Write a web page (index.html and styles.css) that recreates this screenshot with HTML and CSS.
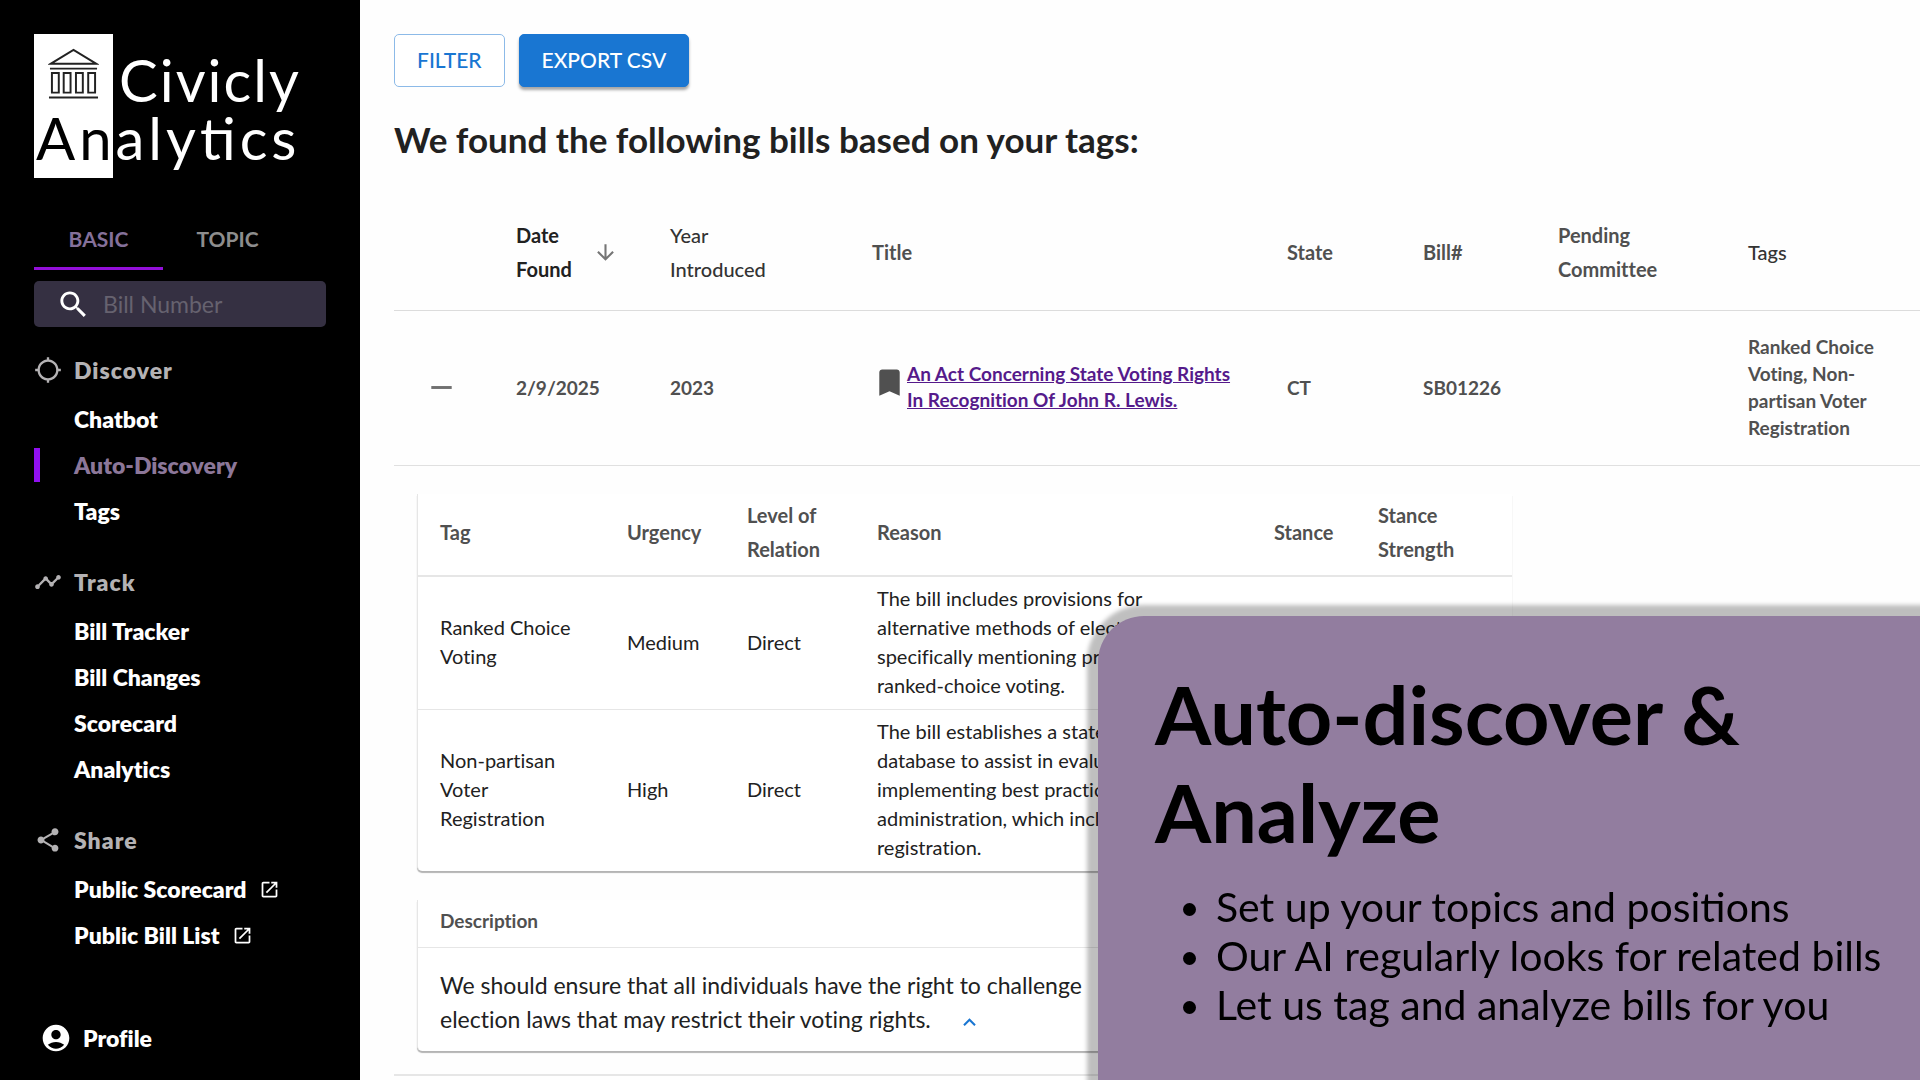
FILE: index.html
```html
<!DOCTYPE html>
<html lang="en">
<head>
  <meta charset="UTF-8">
  <meta name="viewport" content="width=device-width, initial-scale=1.0">
  <title>Civicly Analytics</title>
  <link rel="stylesheet" href="styles.css">
</head>
<body>
  <aside class="sidebar">
    <div class="logo">
      <div class="logo-mark">
        <svg class="logo-icon" viewBox="0 0 52 52" fill="none" stroke="#222" stroke-width="2">
          <path d="M3 15.500 26 1.500 49 15.500zM2 20.500h48M1 50h50"/>
          <path d="M4 25h7v20h-7zM16 25h7v20h-7zM28.500 25h7v20h-7zM41 25h7v20h-7z"/>
        </svg>
      </div>
      <span class="logo-top">Civicly</span>
      <span class="logo-bottom"><span class="logo-dark">An</span>alytics</span>
    </div>

    <div class="tabs" role="tablist">
      <button class="tab active" role="tab" aria-selected="true">BASIC</button>
      <button class="tab" role="tab" aria-selected="false">TOPIC</button>
    </div>

    <label class="search">
      <svg class="search-icon" viewBox="0 0 24 24"><path d="M15.500 14h-.790l-.280-.270C15.410 12.590 16 11.110 16 9.500 16 5.910 13.090 3 9.500 3S3 5.910 3 9.500 5.910 16 9.500 16c1.610 0 3.090-.590 4.230-1.570l.270.280v.790l5 4.990L20.490 19l-4.990-5zm-6 0C7.010 14 5 11.990 5 9.500S7.010 5 9.500 5 14 7.010 14 9.500 11.990 14 9.500 14z"/></svg>
      <input type="text" placeholder="Bill Number" aria-label="Bill Number">
    </label>

    <nav class="menu">
      <section class="group">
        <h2>
          <svg viewBox="0 0 24 24"><path d="M20.940 11c-.460-4.170-3.770-7.480-7.940-7.940V1h-2v2.060C6.830 3.520 3.520 6.830 3.060 11H1v2h2.060c.460 4.170 3.770 7.480 7.940 7.940V23h2v-2.060c4.170-.460 7.480-3.770 7.940-7.940H23v-2h-2.060zM12 19c-3.870 0-7-3.130-7-7s3.130-7 7-7 7 3.130 7 7-3.130 7-7 7z"/></svg>
          Discover
        </h2>
        <a href="#">Chatbot</a>
        <a href="#" class="current">Auto-Discovery</a>
        <a href="#">Tags</a>
      </section>
      <section class="group">
        <h2>
          <svg viewBox="0 0 24 24"><path d="M23 8c0 1.100-.900 2-2 2-.180 0-.350-.020-.510-.070l-3.560 3.550c.050.160.070.340.070.520 0 1.100-.900 2-2 2s-2-.900-2-2c0-.180.020-.360.070-.520l-2.550-2.550c-.160.050-.340.070-.520.070s-.360-.020-.520-.070l-4.550 4.560c.050.160.070.330.070.510 0 1.100-.900 2-2 2s-2-.900-2-2 .900-2 2-2c.180 0 .350.020.510.070l4.560-4.550C8.020 9.360 8 9.180 8 9c0-1.100.900-2 2-2s2 .900 2 2c0 .180-.020.360-.070.520l2.550 2.550c.160-.050.340-.070.520-.070s.360.020.520.070l3.550-3.560C19.020 8.350 19 8.180 19 8c0-1.100.900-2 2-2s2 .900 2 2z"/></svg>
          Track
        </h2>
        <a href="#">Bill Tracker</a>
        <a href="#">Bill Changes</a>
        <a href="#">Scorecard</a>
        <a href="#">Analytics</a>
      </section>
      <section class="group">
        <h2>
          <svg viewBox="0 0 24 24"><path d="M18 16.080c-.760 0-1.440.300-1.960.770L8.910 12.700c.050-.230.090-.460.090-.700s-.040-.470-.090-.700l7.050-4.110c.540.500 1.250.810 2.040.810 1.660 0 3-1.340 3-3s-1.340-3-3-3-3 1.340-3 3c0 .240.040.470.090.700L8.040 9.810C7.500 9.310 6.790 9 6 9c-1.660 0-3 1.340-3 3s1.340 3 3 3c.790 0 1.500-.310 2.040-.810l7.120 4.160c-.050.210-.080.430-.080.650 0 1.610 1.310 2.920 2.920 2.920s2.920-1.310 2.920-2.920-1.310-2.920-2.920-2.920z"/></svg>
          Share
        </h2>
        <a href="#">Public Scorecard
          <svg viewBox="0 0 24 24"><path d="M19 19H5V5h7V3H5c-1.110 0-2 .900-2 2v14c0 1.100.890 2 2 2h14c1.100 0 2-.900 2-2v-7h-2v7zM14 3v2h3.590l-9.830 9.830 1.410 1.410L19 6.410V10h2V3h-7z"/></svg>
        </a>
        <a href="#">Public Bill List
          <svg viewBox="0 0 24 24"><path d="M19 19H5V5h7V3H5c-1.110 0-2 .900-2 2v14c0 1.100.890 2 2 2h14c1.100 0 2-.900 2-2v-7h-2v7zM14 3v2h3.590l-9.830 9.830 1.410 1.410L19 6.410V10h2V3h-7z"/></svg>
        </a>
      </section>
    </nav>

    <a href="#" class="profile">
      <svg viewBox="0 0 24 24"><path d="M12 2C6.480 2 2 6.480 2 12s4.480 10 10 10 10-4.480 10-10S17.520 2 12 2zm0 4c1.930 0 3.500 1.570 3.500 3.500S13.930 13 12 13s-3.500-1.570-3.500-3.500S10.070 6 12 6zm0 14c-2.030 0-4.430-.820-6.140-2.880C7.550 15.800 9.680 15 12 15s4.450.800 6.140 2.120C16.430 19.180 14.030 20 12 20z"/></svg>
      Profile
    </a>
  </aside>

  <main class="content">
    <div class="actions">
      <button class="btn btn-outline">FILTER</button>
      <button class="btn btn-primary">EXPORT CSV</button>
    </div>

    <h1>We found the following bills based on your tags:</h1>

    <table class="bills">
      <colgroup>
        <col class="col-toggle">
        <col class="col-date">
        <col class="col-year">
        <col class="col-title">
        <col class="col-state">
        <col class="col-bill">
        <col class="col-committee">
        <col class="col-tags">
      </colgroup>
      <thead>
        <tr>
          <td></td>
          <th class="sorted">
            <div class="sort">
              <span>Date Found</span>
              <svg viewBox="0 0 24 24"><path d="M20 12l-1.410-1.410L13 16.170V4h-2v12.170l-5.580-5.590L4 12l8 8 8-8z"/></svg>
            </div>
          </th>
          <th class="dark">Year<br>Introduced</th>
          <th>Title</th>
          <th>State</th>
          <th>Bill#</th>
          <th>Pending Committee</th>
          <th class="dark">Tags</th>
        </tr>
      </thead>
      <tbody>
        <tr class="bill-row">
          <td>
            <button class="toggle" aria-label="Collapse">
              <svg viewBox="0 0 24 24"><path d="M19 13H5v-2h14v2z"/></svg>
            </button>
          </td>
          <td>2/9/2025</td>
          <td>2023</td>
          <td>
            <div class="bill-title">
              <svg viewBox="0 0 24 24"><path d="M17 3H7c-1.100 0-1.990.900-1.990 2L5 21l7-3 7 3V5c0-1.100-.900-2-2-2z"/></svg>
              <a href="#">An Act Concerning State Voting Rights In Recognition Of John R. Lewis.</a>
            </div>
          </td>
          <td>CT</td>
          <td>SB01226</td>
          <td></td>
          <td>Ranked Choice Voting, Non-partisan Voter Registration</td>
        </tr>
        <tr>
          <td class="details" colspan="8">
            <table class="card tag-table">
              <colgroup>
                <col class="col-tag">
                <col class="col-urgency">
                <col class="col-level">
                <col class="col-reason">
                <col class="col-stance">
                <col class="col-strength">
              </colgroup>
              <thead>
                <tr>
                  <th>Tag</th>
                  <th>Urgency</th>
                  <th>Level of Relation</th>
                  <th>Reason</th>
                  <th>Stance</th>
                  <th>Stance Strength</th>
                </tr>
              </thead>
              <tbody>
                <tr>
                  <td>Ranked Choice Voting</td>
                  <td>Medium</td>
                  <td>Direct</td>
                  <td>The bill includes provisions for<br>alternative methods of elections,<br>specifically mentioning proposed<br>ranked-choice voting.</td>
                  <td></td>
                  <td></td>
                </tr>
                <tr>
                  <td>Non-partisan Voter Registration</td>
                  <td>High</td>
                  <td>Direct</td>
                  <td>The bill establishes a statewide<br>database to assist in evaluating and<br>implementing best practices in<br>administration, which includes<br>registration.</td>
                  <td></td>
                  <td></td>
                </tr>
              </tbody>
            </table>

            <div class="card description">
              <h3>Description</h3>
              <p>
                We should ensure that all individuals have the right to challenge election laws that may restrict their voting rights.
                <button class="less" aria-label="Show less">
                  <svg viewBox="0 0 24 24"><path d="M7.410 15.410 12 10.830l4.590 4.580L18 14l-6-6-6 6z"/></svg>
                </button>
              </p>
            </div>
          </td>
        </tr>
      </tbody>
    </table>
  </main>

  <div class="promo">
    <h2>Auto-discover &amp; Analyze</h2>
    <ul>
      <li>Set up your topics and positions</li>
      <li>Our AI regularly looks for related bills</li>
      <li>Let us tag and analyze bills for you</li>
    </ul>
  </div>
</body>
</html>
```
FILE: styles.css
```css
* {
  box-sizing: border-box;
}
body {
  margin: 0;
  display: flex;
  height: 100vh;
  overflow: hidden;
  font-family: Lato, sans-serif;
  font-size: 20px;
  font-variant-ligatures: no-common-ligatures;
  color: #212121;
  background-color: #fefefe;
}
button {
  font-family: inherit;
  cursor: pointer;
}
svg {
  flex-shrink: 0;
  fill: currentColor;
}

/* sidebar */
.sidebar {
  flex: 0 0 360px;
  padding: 34px;
  background-color: #000;
  color: #fff;
}
.logo {
  display: grid;
  grid-template-columns: 79px 1fr;
  grid-template-rows: 80px 64px;
  font-size: 58px;
  line-height: 56px;
  white-space: nowrap;
}
.logo-mark {
  grid-column: 1;
  grid-row: 1 / 3;
  padding: 14px;
  background-color: #fff;
}
.logo-icon {
  display: block;
  width: 51px;
  height: 52px;
  fill: none;
}
.logo-top {
  grid-column: 2;
  grid-row: 1;
  padding: 18px 0 0 6px;
  letter-spacing: 2px;
}
.logo-bottom {
  grid-column: 1 / 3;
  grid-row: 2;
  padding-left: 2px;
  line-height: 48px;
  letter-spacing: 4px;
  font-feature-settings: "liga";
}
.logo-dark {
  color: #000;
}
.tabs {
  display: flex;
  margin-top: 34px;
}
.tab {
  width: 129px;
  height: 58px;
  padding: 0 0 2px;
  border: none;
  border-bottom: 3px solid transparent;
  background: none;
  color: #8d8d8d;
  font-size: 21px;
  font-weight: 700;
}
.tab.active {
  color: #84709a;
  border-color: #930fd9;
}
.search {
  display: flex;
  align-items: center;
  gap: 12px;
  height: 46px;
  margin-top: 11px;
  padding: 0 22px;
  border-radius: 5px;
  background-color: #353042;
}
.search-icon {
  width: 35px;
  height: 35px;
}
.search input {
  width: 100%;
  min-width: 0;
  padding: 0;
  border: none;
  outline: none;
  background: none;
  color: #fff;
  font-family: inherit;
  font-size: 23px;
}
.search input::placeholder {
  color: #66626f;
}
.menu {
  margin-top: 18px;
}
.group {
  margin-bottom: 23px;
}
.group h2 {
  display: flex;
  align-items: center;
  gap: 12px;
  height: 51px;
  margin: 0;
  padding-bottom: 2px;
  color: #b4b2b4;
  font-size: 23px;
  font-weight: 800;
  letter-spacing: 1px;
}
.group h2 svg {
  width: 28px;
  height: 28px;
}
.group a {
  display: flex;
  align-items: center;
  gap: 12px;
  height: 46px;
  padding-left: 40px;
  color: #fff;
  font-size: 23px;
  font-weight: 800;
  text-decoration: none;
}
.group a svg {
  width: 21px;
  height: 21px;
}
.group a.current {
  position: relative;
  color: #8c7799;
}
.group a.current::before {
  content: "";
  position: absolute;
  left: 0;
  top: 6px;
  width: 6px;
  height: 34px;
  background-color: #9010f0;
}
.profile {
  display: flex;
  align-items: center;
  gap: 11px;
  margin-top: 64px;
  padding-left: 6px;
  color: #fff;
  font-size: 23px;
  font-weight: 800;
  text-decoration: none;
}
.profile svg {
  width: 32px;
  height: 32px;
}

/* bills */
.content {
  flex: 1;
  min-width: 0;
  padding: 34px 0 0 34px;
}
.actions {
  display: flex;
  gap: 14px;
}
.btn {
  height: 53px;
  padding: 0 22px 2px;
  border: 1px solid #1976d2;
  border-radius: 5px;
  font-size: 21px;
  font-weight: 500;
}
.btn-outline {
  border-color: #8cbae8;
  background-color: #fff;
  color: #1976d2;
}
.btn-primary {
  background-color: #1976d2;
  color: #fff;
  box-shadow: 0 3px 3px rgba(0, 0, 0, 0.35);
}
h1 {
  margin: 30px 0 41px;
  font-size: 35px;
  line-height: 44px;
}
table {
  border-collapse: separate;
  border-spacing: 0;
  table-layout: fixed;
}
th {
  font-weight: 700;
  line-height: 34px;
  text-align: left;
  color: #505050;
}
.bills {
  width: 100%;
}
.bills > thead > tr > * {
  height: 109px;
  padding: 0 18px 8px;
  border-bottom: 1px solid #dcdcdc;
}
.col-toggle { width: 104px; }
.col-date { width: 154px; }
.col-year { width: 202px; }
.col-state { width: 136px; }
.col-bill { width: 135px; }
.col-committee { width: 190px; }
.col-tags { width: 190px; }
th.dark {
  color: #333;
  font-weight: 500;
}
th.sorted {
  color: #212121;
}
.sort {
  display: flex;
  align-items: center;
  gap: 21px;
}
.sort span {
  width: 56px;
}
.sort svg {
  width: 25px;
  height: 25px;
  color: #757575;
}
.bill-row td {
  height: 155px;
  padding: 0 18px 2px;
  border-bottom: 1px solid #e0e0e0;
  color: #505050;
  font-size: 19px;
  font-weight: 700;
  line-height: 27px;
}
.toggle {
  display: flex;
  padding: 0 12px;
  border: none;
  background: none;
  color: #707070;
}
.toggle svg {
  width: 35px;
  height: 35px;
}
.bill-title {
  display: flex;
  padding-right: 18px;
  line-height: 26px;
}
.bill-title svg {
  width: 35px;
  height: 35px;
  margin-top: 4px;
}
.bill-title a {
  color: #551a8b;
}
.details {
  padding: 28px 23px 23px;
  border-bottom: 2px solid #e6e6e6;
}
.card {
  width: 1095px;
  max-width: 100%;
  border-left: 1px solid #e6e6e6;
  border-radius: 0 0 5px 5px;
  background-color: #fff;
  box-shadow: 0 2px 1px #b4b4b4;
}
.tag-table th {
  padding: 4px 22px 9px;
  border-bottom: 2px solid #e6e6e6;
}
.tag-table td {
  padding: 7px 22px 9px;
  line-height: 29px;
}
.tag-table tbody tr:first-child td {
  border-bottom: 1px solid #e6e6e6;
}
.col-tag { width: 187px; }
.col-urgency { width: 120px; }
.col-level { width: 130px; }
.col-stance { width: 104px; }
.col-strength { width: 156px; }
.description {
  margin-top: 29px;
}
.description h3 {
  margin: 0;
  padding: 4px 22px 9px;
  border-bottom: 1px solid #e6e6e6;
  color: #505050;
  font-size: 19px;
  line-height: 34px;
}
.description p {
  max-width: 710px;
  margin: 0;
  padding: 20px 22px 15px;
  font-size: 23px;
  line-height: 34px;
}
.less {
  margin-left: 20px;
  padding: 0;
  border: none;
  background: none;
  color: #1976d2;
  vertical-align: middle;
}
.less svg {
  display: block;
  width: 25px;
  height: 25px;
}

/* promo panel over the page */
.promo {
  position: fixed;
  right: 0;
  bottom: 0;
  width: 822px;
  padding: 49px 20px 51px 57px;
  border-radius: 46px 0 0 0;
  background-color: #927d9f;
  color: #000;
  font-variant-ligatures: normal;
  box-shadow: 0 0 4px 11px rgba(0, 0, 0, 0.25);
}
.promo h2 {
  max-width: 640px;
  margin: 0;
  font-size: 81px;
  line-height: 98px;
}
.promo ul {
  margin: 21px 0 0;
  padding-left: 61px;
  font-size: 41px;
  line-height: 49px;
}
```
